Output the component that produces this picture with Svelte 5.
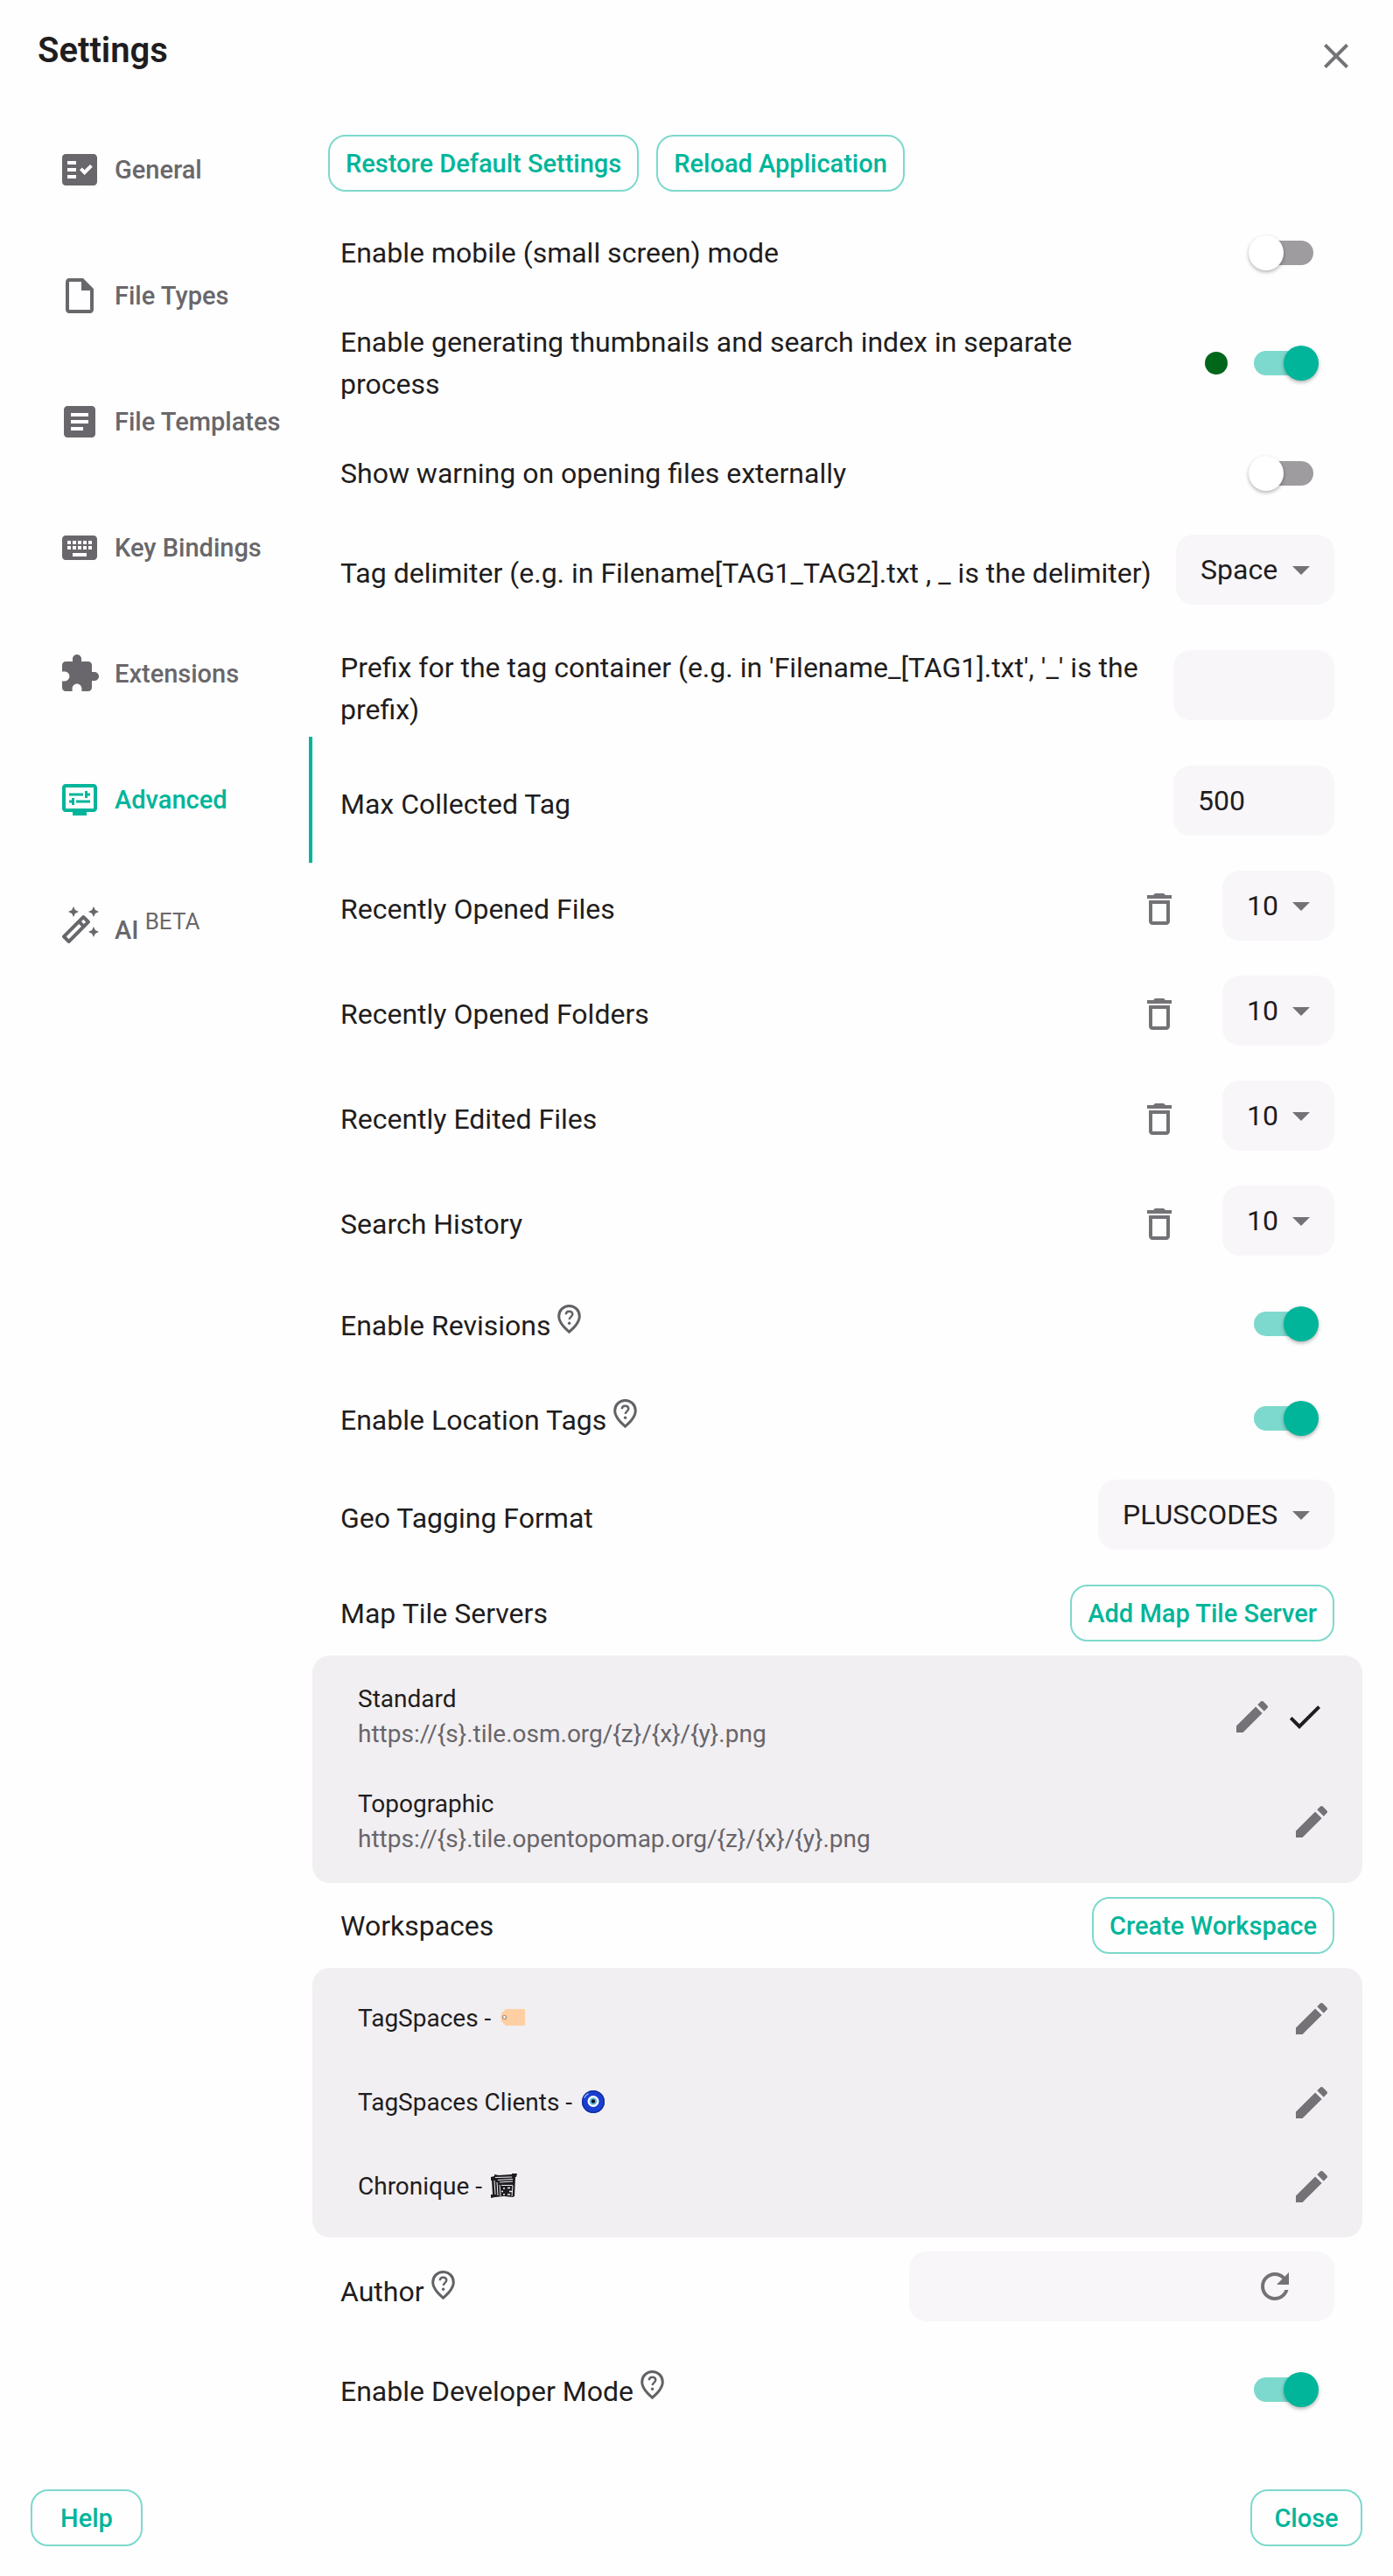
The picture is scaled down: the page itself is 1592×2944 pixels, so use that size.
<script lang="ts">
    const icons = {
        general: 'M20 3H4c-1.1 0-2 .9-2 2v14c0 1.1.9 2 2 2h16c1.1 0 2-.9 2-2V5c0-1.1-.9-2-2-2zM10 17H5v-2h5v2zm0-4H5v-2h5v2zm0-4H5V7h5v2zm4.82 6L12 12.16l1.41-1.41 1.41 1.42L17.99 9l1.42 1.42L14.82 15z',
        file: 'M14 2H6c-1.1 0-1.99.9-1.99 2L4 20c0 1.1.89 2 1.99 2H18c1.1 0 2-.9 2-2V8l-6-6zM6 20V4h7v5h5v11H6z',
        template: 'M19 3H5c-1.1 0-2 .9-2 2v14c0 1.1.9 2 2 2h14c1.1 0 2-.9 2-2V5c0-1.1-.9-2-2-2zm-5 14H7v-2h7v2zm3-4H7v-2h10v2zm0-4H7V7h10v2z',
        keyboard: 'M20 5H4c-1.1 0-1.99.9-1.99 2L2 17c0 1.1.9 2 2 2h16c1.1 0 2-.9 2-2V7c0-1.1-.9-2-2-2zm-9 3h2v2h-2V8zm0 3h2v2h-2v-2zM8 8h2v2H8V8zm0 3h2v2H8v-2zm-1 2H5v-2h2v2zm0-3H5V8h2v2zm9 7H8v-2h8v2zm0-4h-2v-2h2v2zm0-3h-2V8h2v2zm3 3h-2v-2h2v2zm0-3h-2V8h2v2z',
        extension: 'M20.5 11H19V7c0-1.1-.9-2-2-2h-4V3.5C13 2.12 11.88 1 10.5 1S8 2.12 8 3.5V5H4c-1.1 0-1.99.9-1.99 2v3.8H3.5c1.49 0 2.7 1.21 2.7 2.7s-1.21 2.7-2.7 2.7H2V20c0 1.1.9 2 2 2h3.8v-1.5c0-1.49 1.21-2.7 2.7-2.7 1.49 0 2.7 1.21 2.7 2.7V22H17c1.1 0 2-.9 2-2v-4h1.5c1.38 0 2.5-1.12 2.5-2.5S21.88 11 20.5 11z',
        advanced: 'M20 3H4c-1.11 0-2 .89-2 2v12c0 1.1.89 2 2 2h4v2h8v-2h4c1.1 0 2-.9 2-2V5c0-1.11-.9-2-2-2zm0 14H4V5h16v12zM6 8.25h8v1.5H6zM16.5 9.75H18v-1.5h-1.5V7H15v4h1.5zM10 12.25h8v1.5h-8zM7.5 15H9v-4H7.5v1.25H6v1.5h1.5z',
        wand: 'M20 7l.94-2.06L23 4l-2.06-.94L20 1l-.94 2.06L17 4l2.06.94zM8.5 7l.94-2.06L11.5 4l-2.06-.94L8.5 1l-.94 2.06L5.5 4l2.06.94zM20 12.5l-.94 2.06-2.06.94 2.06.94.94 2.06.94-2.06L23 15.5l-2.06-.94zM17.71 9.12l-2.83-2.83C14.68 6.1 14.43 6 14.17 6c-.26 0-.51.1-.71.29L2.29 17.46c-.39.39-.39 1.02 0 1.41l2.83 2.83c.2.2.45.3.71.3s.51-.1.71-.29l11.17-11.17c.39-.39.39-1.03 0-1.42zm-3.54-.7l1.41 1.41L14.41 11 13 9.59l1.17-1.17zM5.83 19.59l-1.41-1.41L11.59 11 13 12.41l-7.17 7.18z',
        trash: 'M6 19c0 1.1.9 2 2 2h8c1.1 0 2-.9 2-2V7H6v12zM8 9h8v10H8V9zm7.5-5l-1-1h-5l-1 1H5v2h14V4h-3.5z',
        edit: 'M3 17.25V21h3.75L17.81 9.94l-3.75-3.75L3 17.25zM20.71 7.04c.39-.39.39-1.02 0-1.41l-2.34-2.34c-.39-.39-1.02-.39-1.41 0l-1.83 1.83 3.75 3.75 1.83-1.83z',
        check: 'M9 16.17L4.83 12l-1.42 1.41L9 19 21 7l-1.41-1.41z',
        refresh: 'M17.65 6.35C16.2 4.9 14.21 4 12 4c-4.42 0-7.99 3.58-7.99 8s3.57 8 7.99 8c3.73 0 6.84-2.55 7.73-6h-2.08c-.82 2.33-3.04 4-5.65 4-3.31 0-6-2.69-6-6s2.69-6 6-6c1.66 0 3.14.69 4.22 1.78L13 11h7V4l-2.35 2.35z',
        close: 'M19 6.41L17.59 5 12 10.59 6.41 5 5 6.41 10.59 12 5 17.59 6.41 19 12 13.41 17.59 19 19 17.59 13.41 12z',
        arrow: 'M7 10l5 5 5-5z',
    };

    const tabs = [
        { label: 'General', icon: icons.general },
        { label: 'File Types', icon: icons.file },
        { label: 'File Templates', icon: icons.template },
        { label: 'Key Bindings', icon: icons.keyboard },
        { label: 'Extensions', icon: icons.extension },
        { label: 'Advanced', icon: icons.advanced },
        { label: 'AI', icon: icons.wand, beta: true },
    ];

    const counts = ['5', '10', '20', '50'];

    let current = $state('Advanced');
    let mobileMode = $state(false);
    let worker = $state(true);
    let warnExternal = $state(false);
    let delimiter = $state('Space');
    let prefix = $state('');
    let maxTags = $state(500);
    let revisions = $state(true);
    let locationTags = $state(true);
    let geoFormat = $state('PLUSCODES');
    let author = $state('');
    let devMode = $state(true);

    let histories = $state([
        { id: 'files', label: 'Recently Opened Files', count: '10' },
        { id: 'folders', label: 'Recently Opened Folders', count: '10' },
        { id: 'edited', label: 'Recently Edited Files', count: '10' },
        { id: 'search', label: 'Search History', count: '10' },
    ]);

    const servers = [
        { name: 'Standard', url: 'https://{s}.tile.osm.org/{z}/{x}/{y}.png', selected: true },
        { name: 'Topographic', url: 'https://{s}.tile.opentopomap.org/{z}/{x}/{y}.png', selected: false },
    ];

    const workspaces = [
        { name: 'TagSpaces', symbol: 'tag' },
        { name: 'TagSpaces Clients', symbol: 'eye' },
        { name: 'Chronique', symbol: 'scroll' },
    ];
</script>

{#snippet icon(d: string)}
    <svg class="icon" viewBox="0 0 24 24" aria-hidden="true"><path {d} fill-rule="evenodd" /></svg>
{/snippet}

{#snippet help(topic: string)}
    <button class="help" aria-label="Help about {topic}">
        <svg viewBox="0 0 27 33" aria-hidden="true">
            <path d="M13.5 1.5c6.7 0 11.8 5.2 11.8 11.8 0 4.2-2 7.6-5 11.2-2 2.4-4.4 4.4-6.8 6.7-2.4-2.3-4.8-4.3-6.8-6.7-3-3.6-5-7-5-11.2C1.7 6.7 6.8 1.500 13.5 1.500z" stroke-width="3" />
            <path d="M9.8 11.3c0-2.2 1.6-3.5 3.7-3.5s3.8 1.3 3.8 3.3c0 2.6-3.6 2.9-3.6 6" stroke-width="2.4" />
            <circle cx="13.6" cy="21.3" r="1.7" />
        </svg>
    </button>
{/snippet}

{#snippet picker(id: string, options: string[], value: string, change: (v: string) => void)}
    <div class="select">
        <select {id} {value} onchange={(e) => change(e.currentTarget.value)}>
            {#each options as option}
                <option>{option}</option>
            {/each}
        </select>
        {@render icon(icons.arrow)}
    </div>
{/snippet}

<div class="dialog">
    <header>
        <h1>Settings</h1>
        <button class="icon-button" aria-label="Close settings">{@render icon(icons.close)}</button>
    </header>

    <div class="body">
        <nav>
            {#each tabs as tab}
                <button class="tab" class:active={current === tab.label} onclick={() => current = tab.label}>
                    {@render icon(tab.icon)}
                    <span>{tab.label}{#if tab.beta}&nbsp;<sup>BETA</sup>{/if}</span>
                </button>
            {/each}
        </nav>

        <main>
            <div class="actions">
                <button class="outlined">Restore Default Settings</button>
                <button class="outlined">Reload Application</button>
            </div>

            <div class="row toggle">
                <label for="mobile">Enable mobile (small screen) mode</label>
                <input class="switch" type="checkbox" id="mobile" bind:checked={mobileMode} />
            </div>
            <div class="row toggle double">
                <label for="worker">Enable generating thumbnails and search index in separate process</label>
                <span class="status"></span>
                <input class="switch" type="checkbox" id="worker" bind:checked={worker} />
            </div>
            <div class="row toggle">
                <label for="warn">Show warning on opening files externally</label>
                <input class="switch" type="checkbox" id="warn" bind:checked={warnExternal} />
            </div>

            <div class="row field">
                <label for="delimiter">Tag delimiter (e.g. in Filename[TAG1_TAG2].txt , _ is the delimiter)</label>
                {@render picker('delimiter', ['Space', '_', '-'], delimiter, (v) => delimiter = v)}
            </div>
            <div class="row field prefix">
                <label for="prefix">Prefix for the tag container (e.g. in 'Filename_[TAG1].txt', '_' is the prefix)</label>
                <input class="text" type="text" id="prefix" bind:value={prefix} />
            </div>
            <div class="row field">
                <label for="max">Max Collected Tag</label>
                <input class="text" type="number" id="max" bind:value={maxTags} />
            </div>

            {#each histories as history}
                <div class="row field">
                    <label for={history.id}>{history.label}</label>
                    <button class="icon-button clear" aria-label="Clear {history.label}">{@render icon(icons.trash)}</button>
                    {@render picker(history.id, counts, history.count, (v) => history.count = v)}
                </div>
            {/each}

            <div class="group">
                <div class="row hinted">
                    <div class="label"><label for="revisions">Enable Revisions</label>{@render help('revisions')}</div>
                    <input class="switch" type="checkbox" id="revisions" bind:checked={revisions} />
                </div>
                <div class="row hinted">
                    <div class="label"><label for="location">Enable Location Tags</label>{@render help('location tags')}</div>
                    <input class="switch" type="checkbox" id="location" bind:checked={locationTags} />
                </div>
                <div class="row field short">
                    <label for="geo">Geo Tagging Format</label>
                    {@render picker('geo', ['PLUSCODES', 'MGRS'], geoFormat, (v) => geoFormat = v)}
                </div>
            </div>

            <section>
                <div class="row heading">
                    <h2>Map Tile Servers</h2>
                    <button class="outlined">Add Map Tile Server</button>
                </div>
                <ul>
                    {#each servers as server}
                        <li class="server">
                            <div class="item">
                                <div>{server.name}</div>
                                <div class="url">{server.url}</div>
                            </div>
                            <button class="icon-button" aria-label="Edit {server.name}">{@render icon(icons.edit)}</button>
                            {#if server.selected}
                                <span class="check">{@render icon(icons.check)}</span>
                            {/if}
                        </li>
                    {/each}
                </ul>
            </section>

            <section>
                <div class="row heading">
                    <h2>Workspaces</h2>
                    <button class="outlined">Create Workspace</button>
                </div>
                <ul>
                    {#each workspaces as ws}
                        <li>
                            <div class="item workspace">
                                <span>{ws.name} -</span>
                                {#if ws.symbol === 'tag'}
                                    <svg class="symbol" viewBox="0 0 30 30" aria-hidden="true">
                                        <path d="M7 4h21a1 1 0 0 1 1 1v17a1 1 0 0 1-1 1H7l-5-5q-1-5 0-9z" fill="#fdcfa3" />
                                        <circle cx="5.5" cy="13.5" r="2" fill="#fff" stroke="#a98672" stroke-width="1.2" />
                                    </svg>
                                {:else if ws.symbol === 'eye'}
                                    <svg class="symbol" viewBox="0 0 30 30" aria-hidden="true">
                                        <circle cx="14" cy="14" r="13" fill="#1a3fd0" />
                                        <circle cx="14" cy="14" r="12.3" fill="none" stroke="#12309c" stroke-width="1.4" />
                                        <path d="M4 9a11 11 0 0 1 4-4" fill="none" stroke="#7fa5f5" stroke-width="1.5" stroke-linecap="round" />
                                        <circle cx="14" cy="13.5" r="6.5" fill="#fff" />
                                        <circle cx="14" cy="13.5" r="4.3" fill="#68b8e0" />
                                        <circle cx="14" cy="13.5" r="2.2" fill="#10151c" />
                                    </svg>
                                {:else}
                                    <svg class="symbol" viewBox="0 0 30 30" aria-hidden="true">
                                        <path d="M0 4l4-1v-2l5 1 15-1v-1h6l-1 4h-1l-1 22-2 1-10-1-10 1-5 1v-4h2L1 8H0z" fill="#1e1c20" />
                                        <path d="M5 4.5l19-.5M8 7.500l17-1M10 10l15-1M12 13.500h13M4 8l1 16M7 10l1 15M10 13l1 13M25 14l-1 12" fill="none" stroke="#f1eff2" stroke-width="1" />
                                        <path d="M14 17h2M19 16.500h3M12 20.500h2M21 20.500h3M14 24h2M19 24h3" fill="none" stroke="#f1eff2" stroke-width="1.5" />
                                    </svg>
                                {/if}
                            </div>
                            <button class="icon-button" aria-label="Edit {ws.name}">{@render icon(icons.edit)}</button>
                        </li>
                    {/each}
                </ul>
            </section>

            <div class="row field short">
                <div class="label"><label for="author">Author</label>{@render help('author')}</div>
                <div class="author">
                    <input class="text" type="text" id="author" bind:value={author} />
                    <button class="icon-button" aria-label="Reset author" onclick={() => author = ''}>{@render icon(icons.refresh)}</button>
                </div>
            </div>
            <div class="row hinted last">
                <div class="label"><label for="dev">Enable Developer Mode</label>{@render help('developer mode')}</div>
                <input class="switch" type="checkbox" id="dev" bind:checked={devMode} />
            </div>
        </main>
    </div>

    <footer>
        <button class="outlined">Help</button>
        <button class="outlined">Close</button>
    </footer>
</div>

<style>
    :global(body) {
        margin: 0;
        background-color: #fefefe;
    }

    .dialog {
        --primary: #00b59a;
        --primary-light: #7dd9cd;
        --text-prim: #1f1d20;
        --text-sec: #69676b;
        --field: #f8f6f9;
        --panel: #f1eff2;

        box-sizing: border-box;
        padding: 0 35px 34px;
        font-family: Roboto, sans-serif;
        font-size: 32px;
        line-height: 48px;
        color: var(--text-prim);
    }

    .dialog * {
        box-sizing: border-box;
    }

    button, input, select {
        font: inherit;
        color: inherit;
        margin: 0;
        padding: 0;
        border: none;
        background: none;
    }

    button, select {
        cursor: pointer;
    }

    h1, h2 {
        margin: 0;
        font-size: inherit;
        font-weight: 400;
    }

    header {
        display: flex;
        justify-content: space-between;
        height: 122px;
        padding: 28px 0 0 8px;
    }

    h1 {
        font-size: 40px;
        line-height: 60px;
        font-weight: 600;
    }

    header .icon-button {
        margin-right: -6px;
    }

    .icon {
        display: block;
        width: 48px;
        height: 48px;
        fill: currentColor;
        flex-shrink: 0;
    }

    .icon-button {
        display: flex;
        align-items: center;
        justify-content: center;
        width: 72px;
        height: 72px;
        flex-shrink: 0;
        color: #747276;
        border-radius: 50%;
    }

    .body {
        display: flex;
    }

    nav {
        width: 322px;
        flex-shrink: 0;
    }

    .tab {
        display: flex;
        align-items: center;
        gap: 16px;
        width: 100%;
        height: 144px;
        padding-left: 32px;
        border-right: 4px solid transparent;
        font-size: 29px;
        font-weight: 500;
        color: var(--text-sec);
    }

    .tab.active {
        color: var(--primary);
        border-color: var(--primary);
    }

    sup {
        font-size: 26px;
        font-weight: 400;
    }

    main {
        flex: 1;
        min-width: 0;
    }

    .actions {
        display: flex;
        gap: 20px;
        padding: 32px 18px 20px;
    }

    .outlined {
        min-width: 128px;
        height: 65px;
        padding: 0 18px;
        border: 2px solid var(--primary-light);
        border-radius: 20px;
        font-size: 29px;
        font-weight: 500;
        color: var(--primary);
        white-space: nowrap;
    }

    .row {
        display: flex;
        align-items: center;
        min-height: 120px;
        padding: 0 32px;
    }

    .row > label, .row > .label, .row > h2 {
        flex: 1;
    }

    .toggle {
        min-height: 100px;
    }

    .double {
        min-height: 152px;
    }

    .prefix {
        min-height: 144px;
    }

    .hinted {
        min-height: 108px;
    }

    .short {
        min-height: 112px;
    }

    .group {
        padding: 4px 0 8px;
    }

    .heading {
        min-height: 0;
        padding: 16px 32px;
    }

    .last {
        margin: 8px 0 60px;
    }

    /* labels sit slightly under the middle of their field */
    .field > label {
        padding-top: 8px;
    }

    .hinted > .label {
        padding-top: 4px;
    }

    .field > .label {
        padding-top: 12px;
    }

    .label {
        display: flex;
        align-items: flex-start;
        gap: 8px;
    }

    .help {
        display: flex;
        color: #636165;
    }

    .help svg {
        width: 27px;
        height: 33px;
        fill: none;
        stroke: currentColor;
    }

    .help circle {
        fill: currentColor;
        stroke: none;
    }

    .switch {
        appearance: none;
        position: relative;
        width: 68px;
        height: 28px;
        margin: 0 24px;
        flex-shrink: 0;
        border-radius: 14px;
        background-color: #9f9ca0;
        cursor: pointer;
    }

    .switch::before {
        content: '';
        position: absolute;
        top: -6px;
        left: -6px;
        width: 40px;
        height: 40px;
        border-radius: 50%;
        background-color: #fff;
        box-shadow: 0 2px 4px rgba(0, 0, 0, .3);
    }

    .switch:checked {
        background-color: var(--primary-light);
    }

    .switch:checked::before {
        left: 34px;
        background-color: var(--primary);
    }

    .status {
        width: 26px;
        height: 26px;
        margin: 0 6px 0 64px;
        border-radius: 50%;
        background-color: #00661a;
    }

    .select {
        display: grid;
        align-items: center;
        flex-shrink: 0;
    }

    .select > :global(*) {
        grid-area: 1 / 1;
    }

    .select .icon {
        justify-self: end;
        margin-right: 14px;
        color: #747276;
        pointer-events: none;
    }

    select {
        appearance: none;
        height: 80px;
        padding: 0 64px 0 28px;
        border-radius: 20px;
        background-color: var(--field);
    }

    .text {
        width: 184px;
        height: 80px;
        padding: 0 28px;
        flex-shrink: 0;
        border-radius: 20px;
        background-color: var(--field);
        appearance: textfield;
    }

    .text::-webkit-inner-spin-button {
        appearance: none;
    }

    .clear {
        margin: 8px 36px 0 0;
    }

    .author {
        display: flex;
        align-items: center;
        width: 486px;
        border-radius: 20px;
        background-color: var(--field);
    }

    .author .text {
        flex: 1;
        min-width: 0;
        background: none;
    }

    .author .icon-button {
        margin-right: 32px;
    }

    ul {
        margin: 0;
        padding: 10px 22px 10px 52px;
        list-style: none;
        border-radius: 20px;
        background-color: var(--panel);
        font-size: 28px;
        line-height: 40px;
    }

    li {
        display: flex;
        align-items: center;
        height: 96px;
    }

    .server {
        height: 120px;
    }

    .item {
        flex: 1;
        min-width: 0;
    }

    .url {
        color: #67656a;
    }

    .workspace {
        display: flex;
        align-items: center;
        gap: 10px;
    }

    .symbol {
        width: 30px;
        height: 30px;
    }

    .check {
        margin-right: 20px;
    }

    footer {
        display: flex;
        justify-content: space-between;
    }
</style>
